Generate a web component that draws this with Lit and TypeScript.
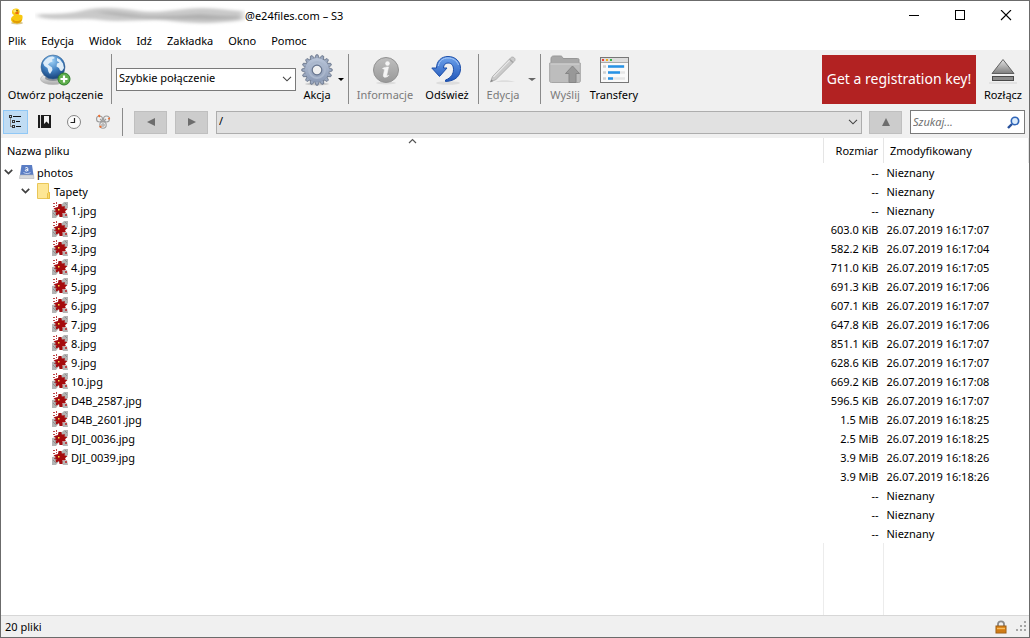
import { LitElement, html, css, svg } from "lit";
import { customElement } from "lit/decorators.js";

interface Row {
  name: string;
  size: string;
  modified: string;
  kind: "drive" | "folder" | "image" | "none";
}

const UNKNOWN = "Nieznany";
const image = (name: string, size: string, time: string): Row => ({
  name,
  size,
  modified: time ? `26.07.2019 ${time}` : UNKNOWN,
  kind: name ? "image" : "none",
});

const ROWS: Row[] = [
  { name: "photos", size: "--", modified: UNKNOWN, kind: "drive" },
  { name: "Tapety", size: "--", modified: UNKNOWN, kind: "folder" },
  image("1.jpg", "--", ""),
  image("2.jpg", "603.0 KiB", "16:17:07"),
  image("3.jpg", "582.2 KiB", "16:17:04"),
  image("4.jpg", "711.0 KiB", "16:17:05"),
  image("5.jpg", "691.3 KiB", "16:17:06"),
  image("6.jpg", "607.1 KiB", "16:17:07"),
  image("7.jpg", "647.8 KiB", "16:17:06"),
  image("8.jpg", "851.1 KiB", "16:17:07"),
  image("9.jpg", "628.6 KiB", "16:17:07"),
  image("10.jpg", "669.2 KiB", "16:17:08"),
  image("D4B_2587.jpg", "596.5 KiB", "16:17:07"),
  image("D4B_2601.jpg", "1.5 MiB", "16:18:25"),
  image("DJI_0036.jpg", "2.5 MiB", "16:18:25"),
  image("DJI_0039.jpg", "3.9 MiB", "16:18:26"),
  image("", "3.9 MiB", "16:18:26"),
  image("", "--", ""),
  image("", "--", ""),
  image("", "--", ""),
];

const MENU = ["Plik", "Edycja", "Widok", "Idź", "Zakładka", "Okno", "Pomoc"];

const duck = html`<svg width="16" height="17" viewBox="0 0 16 17">
  <ellipse cx="8" cy="15" rx="6" ry="1.5" fill="#d8c690" />
  <path d="M3 4C3 1 5.500 .3 7.500 .5C11 .8 11.500 4 9.800 6.500C12 7 13.200 6.500 13.500 8C14 12.500 12 15.500 8 15.500C4 15.500 1.800 13.500 2 10.800C2.200 8.500 4.500 8 5 7C3.500 6.500 3 5.500 3 4Z" fill="#f8c810" />
  <path d="M3.500 11C5 13.500 10 14 13 11C12.500 14 10.500 15.200 8 15.200C5 15.200 3 13.500 3.500 11Z" fill="#e09c06" />
  <circle cx="6" cy="3" r="1.800" fill="#ffe769" />
  <path d="M6 4.500L9.500 3.500L9.500 6L6.800 6Z" fill="#ee6a13" />
  <circle cx="8" cy="2.800" r=".8" fill="#5b3c08" />
</svg>`;

const smear = html`<svg class="smear" viewBox="0 0 210 22">
  <defs><filter id="soft" x="-10%" y="-40%" width="120%" height="180%"><feGaussianBlur stdDeviation="3 1.500" /></filter></defs>
  <g filter="url(#soft)">
    <path d="M3 9C22 9 36 9 50 5C66 1 86 3 104 6C126 9 145 3 168 3C184 3 196 6 208 6L208 15C180 19 160 19 136 16C112 13 92 18 66 15C46 12 25 17 3 12Z" fill="#c9c9c9" />
    <path d="M62 7C78 6 92 9 108 11C130 12 148 10 165 9C180 10 195 12 206 11L206 13C184 16 150 14 130 14C108 14 80 11 62 7Z" fill="#b0b0b0" />
  </g>
</svg>`;

const globe = html`<svg width="32" height="32" viewBox="0 0 32 32">
  <defs>
    <radialGradient id="gl" cx=".45" cy=".25" r=".8"><stop offset="0" stop-color="#9fd2f7" /><stop offset=".5" stop-color="#3f7fc0" /><stop offset="1" stop-color="#12396f" /></radialGradient>
    <linearGradient id="st" x2="0" y2="1"><stop offset="0" stop-color="#fdfdfd" /><stop offset="1" stop-color="#a9a9a9" /></linearGradient>
  </defs>
  <ellipse cx="13" cy="25" rx="12.500" ry="5.500" fill="url(#st)" stroke="#b4b4b4" stroke-width=".7" />
  <ellipse cx="13" cy="24" rx="8" ry="3" fill="#8d9299" />
  <circle cx="13" cy="13" r="12" fill="url(#gl)" stroke="#3b6796" stroke-width=".6" />
  <path d="M3 9C5 5 9 2 13 2.500L15 4L12 5.500L12.500 7.500L10 8.500L8 10.500L10 12L12 13.500L12.500 16L10 20L8.500 18L7.500 14L4.500 12Z" fill="#dcecf9" />
  <path d="M17 4L20 5.500L23 9.500L24 14L22 17L20 16.500L19 14L16.500 12.500L17 9.500L19.500 8.500L17 7Z" fill="#e9f4fc" opacity=".95" />
  <circle cx="24" cy="25" r="6" fill="#5fae4c" stroke="#2d7e2b" stroke-width="1" />
  <path d="M24 21.500V28.500M20.500 25H27.500" stroke="#fff" stroke-width="2.200" />
</svg>`;

const teeth = Array.from({ length: 16 }, (_, i) => i * 22.5);
const gear = html`<svg width="32" height="32" viewBox="0 0 32 32">
  <defs><linearGradient id="ge" x2="0" y2="1"><stop offset="0" stop-color="#b9c5d9" /><stop offset="1" stop-color="#8b9ab5" /></linearGradient></defs>
  <ellipse cx="16" cy="30" rx="12" ry="1.500" fill="#ccc" />
  ${teeth.map((a) => svg`<path d="M13.700 4.500L15 .8H17L18.300 4.500Z" transform="rotate(${a} 16 16)" fill="#9aa7be" stroke="#5b687e" stroke-width=".7" />`)}
  <circle cx="16" cy="16" r="12" fill="url(#ge)" />
  <circle cx="16" cy="16" r="8" fill="none" stroke="#aab7cc" stroke-width="2" />
  <circle cx="16" cy="16" r="4.800" fill="#f0f0f0" stroke="#66748d" stroke-width="1.200" />
</svg>`;

const info = html`<svg width="32" height="32" viewBox="0 0 32 32">
  <defs><linearGradient id="inf" x2="0" y2="1"><stop offset="0" stop-color="#bfbfbf" /><stop offset="1" stop-color="#999" /></linearGradient></defs>
  <ellipse cx="17" cy="29" rx="10" ry="1.500" fill="#ddd" />
  <circle cx="17" cy="16" r="12.500" fill="url(#inf)" stroke="#929292" />
  <circle cx="18.500" cy="9.500" r="2.200" fill="#f5f5f5" />
  <path d="M13.500 14.500C15.500 13.500 17 13 19.500 13L17.800 21C17.600 22.200 18.500 22 19.800 21.300C18.500 23.500 13.700 24.500 14.400 21L15.600 15.500C15 15 14.200 15 13.500 14.500Z" fill="#f5f5f5" stroke="#f5f5f5" stroke-width=".6" />
</svg>`;

const refresh = html`<svg width="32" height="32" viewBox="0 0 32 32">
  <defs><linearGradient id="re" x2="0" y2="1"><stop offset="0" stop-color="#6fa3ec" /><stop offset="1" stop-color="#1f55b8" /></linearGradient></defs>
  <ellipse cx="17" cy="29" rx="12" ry="1.800" fill="#ddd" />
  <path d="M5.500 14C5.500 7 10.500 2.500 17 2.500C24.500 2.500 29.500 7.500 29.500 14.500C29.500 21.500 25 27 14.500 27.500V26C20 24 22.500 20 22.500 15.500C22.500 11.500 20.500 9 17 9C14.200 9 12.500 11 12.500 14H16L8.500 22.500L.8 14Z" fill="url(#re)" stroke="#1b4da8" stroke-width="1" />
  <path d="M7.500 12C8 7 12 4 17 4C21.500 4 26 6.500 27.500 11" fill="none" stroke="#a7c9f7" stroke-width="1" />
</svg>`;

const pencil = html`<svg width="32" height="32" viewBox="0 0 32 32">
  <path d="M8 28C14 25.500 22 26 28 28Z" fill="#ddd" />
  <path d="M3.500 28L5.500 22.500L23.500 4C24.500 2.800 26 2.800 27.200 3.800C28.300 4.800 28.300 6.200 27.300 7.300L9 25.500Z" fill="#cacaca" stroke="#acacac" stroke-width=".9" />
  <path d="M6.500 22.800L23.500 5.500" stroke="#e9e9e9" stroke-width="1.200" />
  <path d="M22.500 5.300L26 8.500" stroke="#a2a2a2" stroke-width="1.300" />
  <path d="M3.500 28L4.300 25.500L6.200 27Z" fill="#888" />
</svg>`;

const upload = html`<svg width="32" height="32" viewBox="0 0 32 32">
  <path d="M2 5C2 3 3 2 4.500 2H11.500C13 2 13.500 3 14 4.500H28.500C29.700 4.500 30 5 30 6V12H2Z" fill="#a8a8a8" stroke="#979797" />
  <path d="M.7 9H31.300V27C31.300 28 30.500 28.500 29.500 28.500H2.500C1.500 28.500 .7 28 .7 27Z" fill="#bdbdbd" stroke="#a6a6a6" />
  <path d="M1.500 10H30.500" stroke="#d4d4d4" />
  <path d="M23.500 12L30.500 19.500H27V28.500H20V19.500H16.500Z" fill="#989898" stroke="#868686" />
</svg>`;

const transfers = html`<svg width="32" height="32" viewBox="0 0 32 32">
  <rect x="2.500" y="3.500" width="28" height="25" fill="#fafafa" stroke="#777" />
  <path d="M3 4H30V8H3Z" fill="#ddd" /><path d="M3 8.500H30" stroke="#aaa" />
  <path d="M4 5H6V7H4Z" fill="#ef4034" /><path d="M8 5H10V7H8Z" fill="#efb21b" /><path d="M12 5H14V7H12Z" fill="#37b648" />
  <path d="M5 12.500H8M5 18.500H8M5 24.500H8" stroke="#d2d2d2" stroke-width="2.500" />
  <path d="M10 12.500H27M10 18.500H27M10 24.500H27" stroke="#e6e6e6" stroke-width="2.500" />
  <path d="M10 12.500H26M10 18.500H22M10 24.500H15" stroke="#2793e6" stroke-width="2.500" />
</svg>`;

const eject = html`<svg width="32" height="32" viewBox="0 0 32 32">
  <defs><linearGradient id="ej" x2="0" y2="1"><stop offset="0" stop-color="#e4e4e4" /><stop offset="1" stop-color="#7d7d7d" /></linearGradient></defs>
  <path d="M2 28.500H30V29.500H2Z" fill="#d5d5d5" />
  <path d="M16 5.500L27 19.500H5Z" fill="url(#ej)" stroke="#555" stroke-width=".9" />
  <rect x="5.500" y="22.500" width="21" height="4" fill="#8b8b8b" stroke="#494949" />
</svg>`;

const outline = html`<svg width="16" height="16" viewBox="0 0 16 16" fill="none" stroke="#333" shape-rendering="crispEdges">
  <path d="M2.500 4V12.500H5M2.500 7.500H3" stroke="#888" />
  <path d="M1.500 1.500H3.500V3.500H1.500ZM4.500 6.500H6.500V8.500H4.500ZM4.500 11.500H6.500V13.500H4.500Z" />
  <path d="M5 2.500H13M8 7.500H12M8 12.500H13" stroke="#111" />
</svg>`;
const book = html`<svg width="16" height="16" viewBox="0 0 16 16">
  <path d="M1 1H3V14H1ZM4 1H14V14H4Z" fill="#1c1c1c" /><path d="M3 1H4V14H3Z" fill="#ddd" /><path d="M7 2H12V10L9.500 7.500L7 10Z" fill="#f2f2f2" />
</svg>`;
const clock = html`<svg width="16" height="16" viewBox="0 0 16 16">
  <circle cx="8" cy="8" r="6.500" fill="#fbfbfb" stroke="#858585" /><path d="M8.500 4V8.500H4.500" stroke="#222" stroke-width="1.200" fill="none" />
</svg>`;
const bonjour = html`<svg width="16" height="16" viewBox="0 0 16 16" fill="none" stroke="#9c9c9c" stroke-width="1.100">
  <circle cx="4.500" cy="5" r="3" /><circle cx="11.500" cy="5" r="3" /><circle cx="8" cy="11" r="3.200" />
  <circle cx="8" cy="11" r="1.200" /><path d="M5 5L8 8L11 5" />
  <path d="M3.500 2.500L5 1.500M13.500 4L14.500 5M5 12L6 13.500" stroke="#ee6c2c" stroke-width="2.200" />
</svg>`;

const chevron = html`<svg class="chev" width="10" height="6" viewBox="0 0 10 6"><path d="M1 .8L5 4.800L9 .8" fill="none" stroke="#444" stroke-width="1.100" /></svg>`;
const twisty = html`<svg width="9" height="6" viewBox="0 0 9 6"><path d="M.8 .8L4.500 4.500L8.200 .8" fill="none" stroke="#404040" stroke-width="1.700" /></svg>`;

const drive = html`<svg width="16" height="16" viewBox="0 0 16 16">
  <path d="M2.500 1H13L14.500 11H1Z" fill="#5a7dc4" /><path d="M1 11H14.500L15 14.500H.5Z" fill="#d7d9dc" stroke="#b3b6ba" stroke-width=".6" />
  <path d="M6.300 4C7.300 3.200 8.800 3.300 8.800 4.600V7.200M8.700 5.400C7.300 5.400 6.300 5.600 6.300 6.400C6.300 7.500 8.200 7.200 8.700 6.300" fill="none" stroke="#fff" stroke-width="1" />
  <path d="M4.500 8.500C7 10 9.500 9.800 11.500 8.600" fill="none" stroke="#d9e4fa" stroke-width=".8" />
</svg>`;
const folder = html`<svg width="16" height="16" viewBox="0 0 16 16">
  <path d="M1.500 .5H12.500V9.500H13.500V15.500H1.500Z" fill="#fde695" stroke="#e9c658" /><path d="M11.500 10.500V15.500H13.500V9.500H12.500Z" fill="#fbd968" stroke="#e2b93f" stroke-width=".8" />
</svg>`;
const splat = html`<svg width="16" height="16" viewBox="0 0 16 16">
  <path d="M8 4L12 0H16V6L12 9ZM0 8L5 7L8 11L4 16H0ZM9 12L15 11L16 16H11Z" fill="#b4b4b4" />
  <path d="M13 1L15 3M1 11L4 14M2 9L5 12" stroke="#8f8f8f" />
  <path d="M6 5L6.500 2H9.500L9.800 4.500L13 4.300L12.500 6.500L15.500 7L13 9.300L14 10.500L12 11.500L10.500 11L10.500 15H7.500L7 12L4.500 13.500L3.500 12L4.500 10L2 9.500L4 8L1.500 6.500L4 5.500Z" fill="#a50b0e" />
  <path d="M1 1H3V2H1ZM4 0H5V2H4ZM1 4H3V5H1ZM4 3H5V4H4ZM13 12H15V14H13Z" fill="#bd4447" />
  <path d="M6 7H7.500V8.500H6Z" fill="#ffe14d" />
</svg>`;

const ICONS = { drive, folder, image: splat, none: "" };

@customElement("app-root")
export class AppRoot extends LitElement {
  static styles = css`
    :host {
      display: flex;
      flex-direction: column;
      box-sizing: border-box;
      height: 100vh;
      border: 1px solid #6b6b6b;
      background: #fff;
      color: #000;
      font: 12px/16px "Noto Sans", "Open Sans", sans-serif;
    }
    * { box-sizing: border-box; }
    svg { display: block; flex: none; }
    button, select, input { font: inherit; color: inherit; margin: 0; padding: 0; border: 0; border-radius: 0; background: none; }
    .title { display: flex; height: 30px; align-items: center; padding-left: 8px; }
    .title h1 { display: flex; align-items: center; flex: 1; margin: 0; font-size: 11px; font-weight: 400; }
    .smear { width: 210px; height: 22px; margin-left: 10px; }
    .win { display: grid; place-items: center; width: 46px; height: 28px; }
    .menu { display: flex; height: 19px; align-items: center; padding-left: 7px; gap: 15px; font-size: 11px; }
    .tools { display: flex; height: 58px; padding: 4px 2px 4px 3px; background: #f0f0f0; align-items: center; font-size: 11px; }
    .tool { display: flex; flex-direction: column; align-items: center; height: 50px; white-space: nowrap; gap: 1px; }
    .tool:disabled { color: #7a7a7a; }
    .open { width: 103px; }
    .action { width: 42px; }
    .info { width: 64px; }
    .refresh { width: 60px; }
    .edit { width: 46px; }
    .send { width: 46px; }
    .transfer { width: 52px; }
    .disconnect { width: 48px; margin-left: 3px; }
    .sep { width: 1px; align-self: stretch; background: #8a8a8a; margin: 0 4px; }
    .sep.tight { margin: 0 1px; }
    .drop { width: 0; height: 0; border: 3px solid transparent; border-top-color: #000; border-bottom: 0; }
    .drop.dim { border-top-color: #666; border-left-width: 4px; border-right-width: 4px; margin: 0 3px 0 2px; }
    .combo { display: grid; align-items: center; }
    .combo > * { grid-area: 1 / 1; }
    .combo select { appearance: none; width: 100%; height: 23px; padding: 0 20px 2px 2px; border: 1px solid #7a7a7a; background: #fff; color: #000; opacity: 1; }
    .chev { justify-self: end; margin-right: 4px; pointer-events: none; }
    .quick { width: 180px; }
    .key { margin-left: auto; width: 154px; height: 49px; background: #b22222; color: #fff; font-size: 14px; white-space: nowrap; }
    .nav { display: flex; height: 30px; background: #f0f0f0; align-items: center; padding: 0 4px 2px 2px; font-size: 11px; }
    .view { display: grid; place-items: center; width: 25px; height: 24px; margin-right: 4px; }
    .view.on { background: #c0dcf3; border: 1px solid #90c8f6; }
    .nav .sep { margin: 0 11px 0 3px; }
    .arrow { display: grid; place-items: center; width: 33px; height: 23px; margin-right: 8px; background: #ccc; border: 1px solid #bfbfbf; }
    .path { flex: 1; margin-right: 7px; }
    .path select { background: #e1e1e1; border-color: #adadad; }
    .search { display: flex; align-items: center; width: 115px; height: 24px; border: 1px solid #7a7a7a; background: #fff; padding: 0 4px 0 2px; }
    .search input { flex: 1; min-width: 0; outline: none; }
    .search input::placeholder { color: #6f6f6f; font-style: italic; opacity: 1; }
    .list { flex: 1; min-height: 0; display: flex; flex-direction: column; overflow: hidden; }
    table { width: 100%; table-layout: fixed; border-collapse: collapse; font-size: 11px; }
    .c-size { width: 60px; }
    .c-date { width: 145px; }
    th, td { padding: 0; white-space: nowrap; text-align: left; font-weight: 400; }
    th { height: 25px; border-right: 1px solid #e5e5e5; }
    td { height: 19px; }
    .first { padding-left: 6px; }
    .head { display: grid; grid-template-columns: 1fr 1fr; align-items: center; height: 25px; }
    .head svg { align-self: start; margin-left: -7px; }
    .size { text-align: right; padding-right: 5px; }
    td.date { padding-left: 3px; }
    th.date { padding-left: 6px; }
    .cell { display: flex; align-items: center; height: 19px; gap: 3px; padding-left: 51px; }
    .cell svg { margin-bottom: 2px; }
    .cell.drive { padding-left: 3px; gap: 2px; }
    .cell.folder { padding-left: 20px; gap: 2px; }
    .twist { width: 13px; }
    .rest { flex: 1; display: grid; grid-template-columns: 1fr 60px 145px; }
    .rest div { border-right: 1px solid #ececec; }
    .status { display: flex; align-items: center; justify-content: space-between; height: 22px; background: #f0f0f0; border-top: 1px solid #d7d7d7; padding: 0 2px 0 4px; font-size: 11px; }
    .corner { display: flex; gap: 9px; align-items: center; }
  `;

  private row(r: Row) {
    const open = r.kind === "drive" || r.kind === "folder";
    return html`<tr>
      <td><div class="cell ${r.kind}">${open ? html`<span class="twist">${twisty}</span>` : ""}${ICONS[r.kind]}<span>${r.name}</span></div></td>
      <td class="size">${r.size}</td>
      <td class="date">${r.modified}</td>
    </tr>`;
  }

  render() {
    return html`
      <header class="title">
        ${duck}
        <h1>${smear}@e24files.com – S3</h1>
        <button class="win" aria-label="Minimalizuj"><svg width="12" height="12"><path d="M1 5.500H11" stroke="#000" /></svg></button>
        <button class="win" aria-label="Maksymalizuj"><svg width="12" height="12"><rect x="1.500" y=".5" width="9" height="9" fill="none" stroke="#000" /></svg></button>
        <button class="win" aria-label="Zamknij"><svg width="12" height="12"><path d="M1 0L11 10M11 0L1 10" stroke="#000" stroke-width="1.100" /></svg></button>
      </header>
      <nav class="menu">${MENU.map((m) => html`<button>${m}</button>`)}</nav>
      <div class="tools">
        <button class="tool open">${globe}Otwórz połączenie</button>
        <span class="sep"></span>
        <div class="combo quick">
          <select aria-label="Szybkie połączenie"><option>Szybkie połączenie</option></select>${chevron}
        </div>
        <button class="tool action">${gear}Akcja</button>
        <span class="drop"></span>
        <span class="sep"></span>
        <button class="tool info" disabled>${info}Informacje</button>
        <button class="tool refresh">${refresh}Odśwież</button>
        <span class="sep tight"></span>
        <button class="tool edit" disabled>${pencil}Edycja</button>
        <span class="drop dim"></span>
        <span class="sep tight"></span>
        <button class="tool send" disabled>${upload}Wyślij</button>
        <button class="tool transfer">${transfers}Transfery</button>
        <button class="key">Get a registration key!</button>
        <button class="tool disconnect">${eject}Rozłącz</button>
      </div>
      <div class="nav">
        <button class="view on" aria-label="Przeglądarka">${outline}</button>
        <button class="view" aria-label="Zakładki">${book}</button>
        <button class="view" aria-label="Historia">${clock}</button>
        <button class="view" aria-label="Bonjour">${bonjour}</button>
        <span class="sep"></span>
        <button class="arrow" aria-label="Wstecz"><svg width="10" height="10"><path d="M9 1V9L1 5Z" fill="#6d6d6d" /></svg></button>
        <button class="arrow" aria-label="Dalej"><svg width="10" height="10"><path d="M1 1V9L9 5Z" fill="#6d6d6d" /></svg></button>
        <div class="combo path">
          <select aria-label="Ścieżka"><option>/</option></select>${chevron}
        </div>
        <button class="arrow" aria-label="W górę"><svg width="10" height="10"><path d="M1 9H9L5 1Z" fill="#6d6d6d" /></svg></button>
        <label class="search">
          <input type="text" placeholder="Szukaj..." aria-label="Szukaj" />
          <svg width="13" height="13" viewBox="0 0 13 13"><path d="M1 12L5 8" stroke="#27509a" stroke-width="2.400" /><circle cx="8" cy="5" r="3.700" fill="#dcecfb" stroke="#2f65b8" stroke-width="1.600" /></svg>
        </label>
      </div>
      <main class="list">
        <table>
          <colgroup><col /><col class="c-size" /><col class="c-date" /></colgroup>
          <thead>
            <tr>
              <th class="first"><div class="head">Nazwa pliku<svg width="9" height="6"><path d="M1 5L4.500 1.500L8 5" fill="none" stroke="#555" stroke-width="1.200" /></svg></div></th>
              <th class="size">Rozmiar</th>
              <th class="date">Zmodyfikowany</th>
            </tr>
          </thead>
          <tbody>${ROWS.map((r) => this.row(r))}</tbody>
        </table>
        <div class="rest"><div></div><div></div></div>
      </main>
      <footer class="status">
        <span>20 pliki</span>
        <span class="corner">
          <svg width="12" height="14" viewBox="0 0 12 14"><path d="M3 7V4C3 .5 9 .5 9 4V7" fill="none" stroke="#8b8b8b" stroke-width="1.800" /><rect x="1" y="6" width="10" height="7" fill="#e08a1c" stroke="#9a5a10" /><path d="M2 8.500H10" stroke="#f7bd63" /><path d="M2 11H10" stroke="#bd6d12" /></svg>
          <svg width="11" height="11"><path d="M8 0H10V2H8ZM4 4H6V6H4ZM8 4H10V6H8ZM0 8H2V10H0ZM4 8H6V10H4ZM8 8H10V10H8Z" fill="#a5a5a5" /></svg>
        </span>
      </footer>
    `;
  }
}
